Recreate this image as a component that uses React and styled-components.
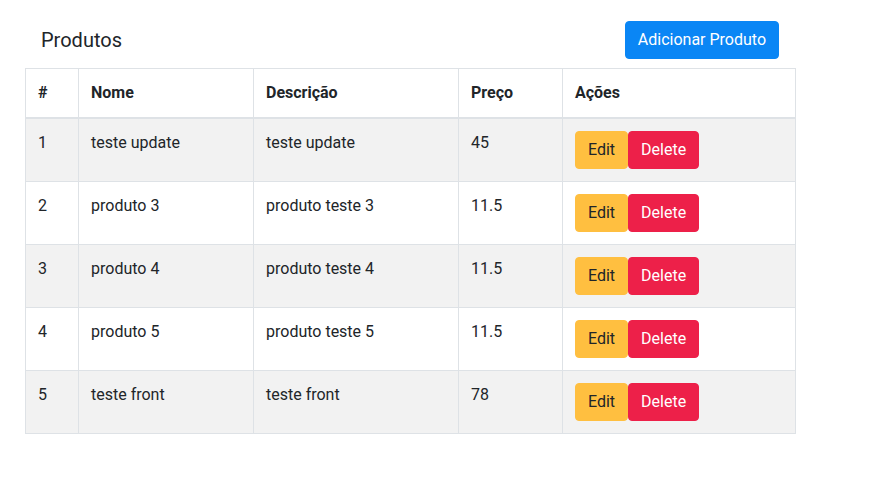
import React from "react";
import styled, { createGlobalStyle } from "styled-components";

const GlobalStyle = createGlobalStyle`
  body {
    margin: 0;
    font-family: Roboto, "Liberation Sans", sans-serif;
    font-size: 16px;
    line-height: 1.5;
    color: #212529;
    background: #fff;
  }
  * { box-sizing: border-box; }
`;

const Page = styled.div`
  padding: 21px 0 0 25px;
  width: 795px;
`;

const Header = styled.div`
  display: flex;
  justify-content: space-between;
  align-items: center;
  padding: 0 16px;
  margin-bottom: 9px;
`;

const Title = styled.h4`
  margin: 0;
  font-size: 20px;
  font-weight: 400;
  line-height: 1.2;
`;

const Button = styled.button`
  font-family: inherit;
  font-size: 16px;
  line-height: 1.5;
  padding: 6px 12px;
  border: 1px solid ${(p) => p.bg};
  border-radius: 4px;
  background: ${(p) => p.bg};
  color: ${(p) => p.fg};
  cursor: pointer;
`;

const Table = styled.table`
  width: 770px;
  table-layout: fixed;
  border-collapse: collapse;
  border: 1px solid #dee2e6;
`;

const Th = styled.th`
  text-align: left;
  font-weight: 700;
  padding: 12px;
  vertical-align: bottom;
  border: 1px solid #dee2e6;
  border-bottom-width: 2px;
`;

const Row = styled.tr`
  background: ${(p) => (p.striped ? "#f2f2f2" : "transparent")};
`;

const Td = styled.td`
  padding: 12px;
  vertical-align: top;
  border: 1px solid #dee2e6;
`;

const Actions = styled.div`
  display: flex;
`;

const produtos = [
  { id: 1, nome: "teste update", descricao: "teste update", preco: "45" },
  { id: 2, nome: "produto 3", descricao: "produto teste 3", preco: "11.5" },
  { id: 3, nome: "produto 4", descricao: "produto teste 4", preco: "11.5" },
  { id: 4, nome: "produto 5", descricao: "produto teste 5", preco: "11.5" },
  { id: 5, nome: "teste front", descricao: "teste front", preco: "78" },
];

export default function App() {
  return (
    <>
      <GlobalStyle />
      <Page>
        <Header>
          <Title>Produtos</Title>
          <Button bg="#0a86f5" fg="#fff">Adicionar Produto</Button>
        </Header>
        <Table>
          <colgroup>
            <col style={{ width: 53 }} />
            <col style={{ width: 175 }} />
            <col style={{ width: 205 }} />
            <col style={{ width: 104 }} />
            <col style={{ width: 233 }} />
          </colgroup>
          <thead>
            <tr>
              <Th>#</Th>
              <Th>Nome</Th>
              <Th>Descrição</Th>
              <Th>Preço</Th>
              <Th>Ações</Th>
            </tr>
          </thead>
          <tbody>
            {produtos.map((p, i) => (
              <Row key={p.id} striped={i % 2 === 0}>
                <Td>{p.id}</Td>
                <Td>{p.nome}</Td>
                <Td>{p.descricao}</Td>
                <Td>{p.preco}</Td>
                <Td>
                  <Actions>
                    <Button bg="#ffbf40" fg="#212529">Edit</Button>
                    <Button bg="#ed2049" fg="#fff">Delete</Button>
                  </Actions>
                </Td>
              </Row>
            ))}
          </tbody>
        </Table>
      </Page>
    </>
  );
}
